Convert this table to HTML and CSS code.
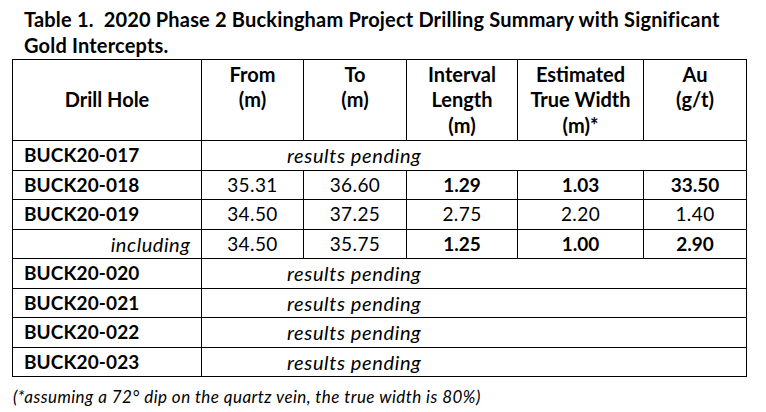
FILE: index.html
```html
<!DOCTYPE html>
<html lang="en">
<head>
<meta charset="utf-8">
<title>Table 1</title>
<link rel="stylesheet" href="styles.css">
</head>
<body>
<div class="page">
  <h1 class="title">Table 1.&nbsp; 2020 Phase 2 Buckingham Project Drilling Summary with Significant Gold Intercepts.</h1>
  <table class="summary">
    <colgroup>
      <col class="c-hole"><col class="c-from"><col class="c-to"><col class="c-int"><col class="c-true"><col class="c-au">
    </colgroup>
    <thead>
      <tr>
        <th class="mid">Drill Hole</th>
        <th>From<br>(m)</th>
        <th>To<br>(m)</th>
        <th>Interval<br>Length<br>(m)</th>
        <th>Estimated<br>True Width<br>(m)*</th>
        <th>Au<br>(g/t)</th>
      </tr>
    </thead>
    <tbody>
      <tr class="r1"><td class="hole">BUCK20-017</td><td colspan="5" class="pending">results pending</td></tr>
      <tr class="r2"><td class="hole">BUCK20-018</td><td>35.31</td><td>36.60</td><td class="b">1.29</td><td class="b">1.03</td><td class="b">33.50</td></tr>
      <tr class="r1"><td class="hole">BUCK20-019</td><td>34.50</td><td>37.25</td><td>2.75</td><td>2.20</td><td>1.40</td></tr>
      <tr class="r2"><td class="incl">including</td><td>34.50</td><td>35.75</td><td class="b">1.25</td><td class="b">1.00</td><td class="b">2.90</td></tr>
      <tr class="r1"><td class="hole">BUCK20-020</td><td colspan="5" class="pending">results pending</td></tr>
      <tr class="r2"><td class="hole">BUCK20-021</td><td colspan="5" class="pending">results pending</td></tr>
      <tr class="r1"><td class="hole">BUCK20-022</td><td colspan="5" class="pending">results pending</td></tr>
      <tr class="r2"><td class="hole">BUCK20-023</td><td colspan="5" class="pending">results pending</td></tr>
    </tbody>
  </table>
  <p class="note">(*assuming a 72° dip on the quartz vein, the true width is 80%)</p>
</div>
</body>
</html>
```

FILE: styles.css
```css
html, body {
  margin: 0;
  padding: 0;
  background: #fff;
}
body {
  font-family: Lato, "Liberation Sans", sans-serif;
  color: #000;
  width: 766px;
  height: 412px;
  overflow: hidden;
}
.page {
  padding: 6px 0 0 12px;
}
.title {
  margin: 0 0 1px 12px;
  width: 730px;
  font-size: 20px;
  letter-spacing: 0.18px;
  font-weight: 700;
  line-height: 26px;
}
.summary {
  border-collapse: collapse;
  table-layout: fixed;
  width: 734px;
  font-size: 19px;
}
.c-hole { width: 189px; }
.c-from { width: 102px; }
.c-to { width: 103px; }
.c-int { width: 111px; }
.c-true { width: 126px; }
.c-au { width: 103px; }
.summary th, .summary td {
  border: 1px solid #000;
  padding: 0 11px;
}
.summary th {
  font-size: 20px;
  font-weight: 700;
  text-align: center;
  vertical-align: top;
  line-height: 25.5px;
  padding-top: 1.5px;
  height: 78px;
}
.summary th.mid {
  vertical-align: middle;
  padding-top: 0;
}
.summary td {
  text-align: center;
  line-height: 22px;
  letter-spacing: 0.4px;
}
.summary .r1 td { height: 29px; }
.summary .r2 td { height: 28px; }
.summary td.hole {
  text-align: left;
  font-weight: 700;
  letter-spacing: 0.1px;
}
.summary td.incl {
  text-align: right;
  font-style: italic;
  font-size: 20px;
  letter-spacing: 0.55px;
  padding-right: 10.5px;
}
.summary td.b {
  font-weight: 700;
  letter-spacing: 0;
}
.summary td.pending {
  text-align: left;
  font-style: italic;
  font-size: 20px;
  letter-spacing: 0.62px;
  padding-left: 85px;
}
.note {
  margin: 10px 0 0 1px;
  font-size: 17px;
  letter-spacing: 0.45px;
  font-style: italic;
  line-height: 20px;
}
```
